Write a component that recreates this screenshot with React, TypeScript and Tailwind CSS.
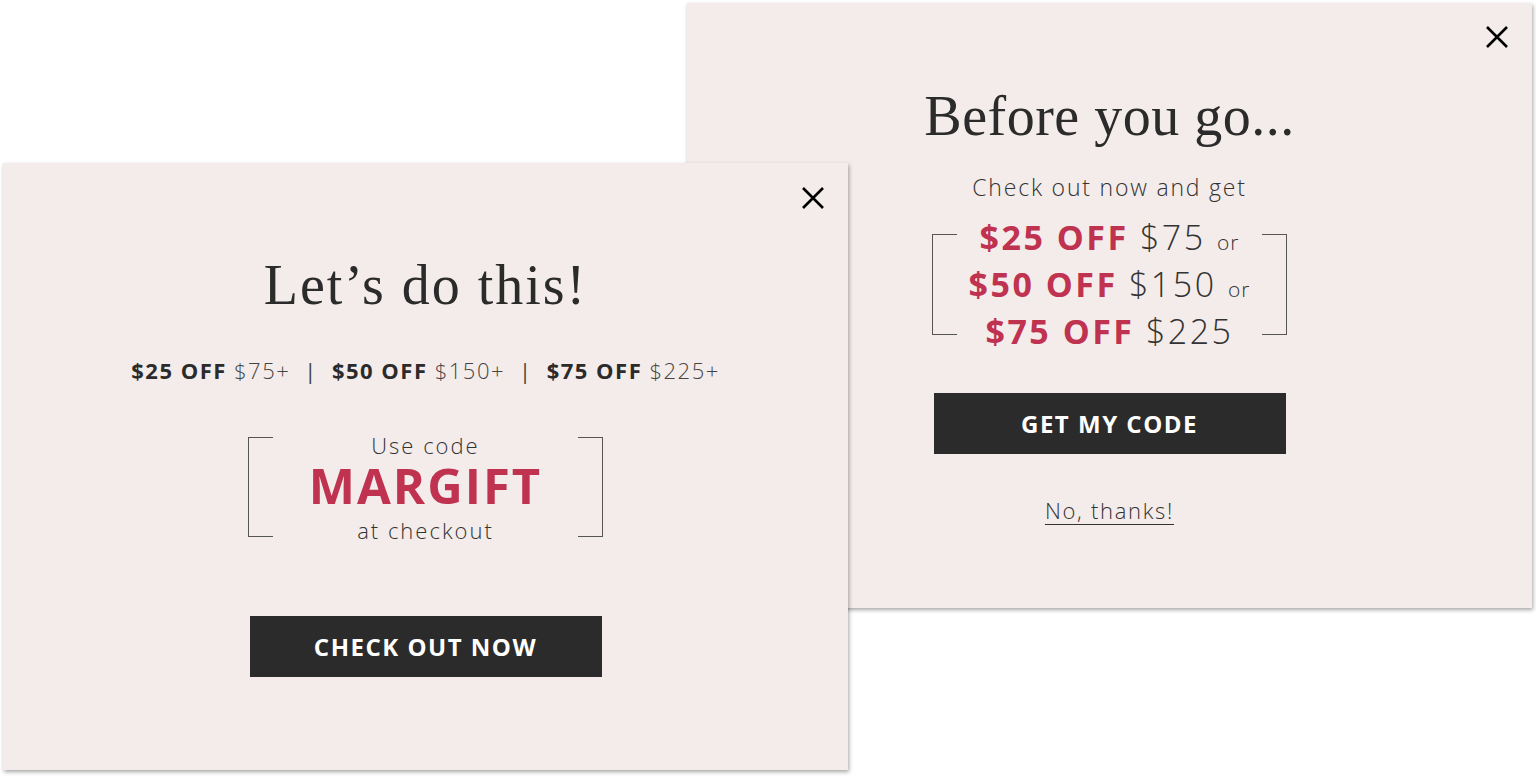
import React from 'react';

const sans = "font-['Open_Sans',_'Noto_Sans',_sans-serif]";

function CloseIcon() {
  return (
    <svg width="24" height="24" viewBox="0 0 24 24" className="text-black">
      <path d="M2 2 L22 22 M22 2 L2 22" stroke="currentColor" strokeWidth="2.6" strokeLinecap="butt" />
    </svg>
  );
}

function Bracket({ side, h }: { side: 'left' | 'right'; h: string }) {
  return (
    <div
      className={`w-[25px] shrink-0 ${h} border-y-[1.5px] border-[#555] ${side === 'left' ? 'border-l-[1.5px]' : 'border-r-[1.5px]'}`}
    />
  );
}

function BackCard() {
  return (
    <div className="absolute left-[687px] top-[3px] w-[845px] h-[605px] bg-[#f4ecea] shadow-[1px_2px_4px_rgba(0,0,0,0.35)]">
      <button className="absolute right-[23px] top-[22px]">
        <CloseIcon />
      </button>
      <div className={`flex flex-col items-center pt-[81px] text-[#2b2b2b] ${sans}`}>
        <h2 className="font-['Liberation_Serif',_serif] text-[56px] leading-[64px] tracking-[0.5px]">Before you go...</h2>
        <p className="mt-[25px] text-[23px] leading-[28px] font-light tracking-[1.8px] text-[#333]">Check out now and get</p>
        <div className="mt-[13px] w-[355px] flex items-center justify-between">
          <Bracket side="left" h="h-[101px]" />
          <div className="flex flex-col items-center whitespace-nowrap text-[34px] leading-[47px] tracking-[2.5px]">
            <div>
              <span className="font-bold text-[#bf3250]">$25 OFF</span>{' '}
              <span className="font-light text-[#333]">$75</span>{' '}
              <span className="text-[21px] leading-none font-light tracking-[1px] text-[#333]">or</span>
            </div>
            <div>
              <span className="font-bold text-[#bf3250]">$50 OFF</span>{' '}
              <span className="font-light text-[#333]">$150</span>{' '}
              <span className="text-[21px] leading-none font-light tracking-[1px] text-[#333]">or</span>
            </div>
            <div>
              <span className="font-bold text-[#bf3250]">$75 OFF</span>{' '}
              <span className="font-light text-[#333]">$225</span>
            </div>
          </div>
          <Bracket side="right" h="h-[101px]" />
        </div>
        <button className="mt-[38px] w-[352px] h-[61px] bg-[#2b2b2b] text-white font-bold text-[24px] tracking-[1.5px]">
          GET MY CODE
        </button>
        <a className="mt-[42px] text-[22px] leading-[28px] font-light tracking-[1.7px] underline underline-offset-[5px] decoration-1 text-[#333]">
          No, thanks!
        </a>
      </div>
    </div>
  );
}

function FrontCard() {
  return (
    <div className="absolute left-[3px] top-[163px] w-[845px] h-[607px] bg-[#f4ecea] shadow-[1px_2px_4px_rgba(0,0,0,0.35)]">
      <button className="absolute right-[23px] top-[23px]">
        <CloseIcon />
      </button>
      <div className={`flex flex-col items-center pt-[90px] text-[#2b2b2b] ${sans}`}>
        <h2 className="font-['Liberation_Serif',_serif] text-[56px] leading-[64px] tracking-[2px]">Let’s do this!</h2>
        <p className="mt-[39px] text-[22px] leading-[28px] tracking-[1.5px] flex items-center gap-[14px] whitespace-nowrap">
          <span>
            <span className="font-bold">$25 OFF</span> <span className="font-light text-[#444]">$75+</span>
          </span>
          <span className="text-[#444]">|</span>
          <span>
            <span className="font-bold">$50 OFF</span> <span className="font-light text-[#444]">$150+</span>
          </span>
          <span className="text-[#444]">|</span>
          <span>
            <span className="font-bold">$75 OFF</span> <span className="font-light text-[#444]">$225+</span>
          </span>
        </p>
        <div className="mt-[53px] w-[355px] h-[100px] flex items-start justify-between">
          <Bracket side="left" h="h-[100px]" />
          <div className="-mt-[4px] flex flex-col items-center whitespace-nowrap">
            <span className="text-[22px] leading-[24px] font-light tracking-[2px] text-[#333]">Use code</span>
            <span className="text-[49px] leading-[56px] font-bold text-[#bf3250] tracking-[2px]">MARGIFT</span>
            <span className="text-[22px] leading-[34px] font-light tracking-[2px] text-[#333]">at checkout</span>
          </div>
          <Bracket side="right" h="h-[100px]" />
        </div>
        <button className="mt-[79px] w-[352px] h-[61px] bg-[#2b2b2b] text-white font-bold text-[24px] tracking-[1.5px]">
          CHECK OUT NOW
        </button>
      </div>
    </div>
  );
}

export default function App() {
  return (
    <div className="relative w-[1536px] h-[776px] bg-white overflow-hidden">
      <BackCard />
      <FrontCard />
    </div>
  );
}
